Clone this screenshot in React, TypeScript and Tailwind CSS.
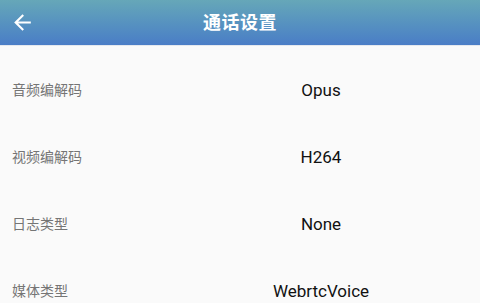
import React from "react";

const rows = [
  { label: "音频编解码", value: "Opus" },
  { label: "视频编解码", value: "H264" },
  { label: "日志类型", value: "None" },
  { label: "媒体类型", value: "WebrtcVoice" },
];

export default function App() {
  return (
    <div
      className="w-[480px] h-[303px] overflow-hidden bg-[#fafafa]"
      style={{ fontFamily: 'Roboto, "Noto Sans CJK SC", sans-serif' }}
    >
      <div className="relative h-[45px] flex items-center justify-center bg-gradient-to-b from-[#66a7b8] to-[#4a7dc6]">
        <svg
          className="absolute left-[10px] top-[10px]"
          width="25"
          height="25"
          viewBox="0 0 24 24"
          fill="white"
        >
          <path d="M20 11H7.83l5.59-5.59L12 4l-8 8 8 8 1.41-1.41L7.83 13H20v-2z" />
        </svg>
        <span className="text-white text-[18px] font-bold tracking-[0.5px]">通话设置</span>
      </div>
      <div className="h-px bg-[#e4e8ee]" />
      <div className="pt-[11px]">
        {rows.map((r) => (
          <div key={r.label} className="h-[67px] flex items-center">
            <div className="w-[162px] pl-[12px] text-[14px] text-[#757575]">{r.label}</div>
            <div className="flex-1 text-center text-[17px] text-[#111]">{r.value}</div>
          </div>
        ))}
      </div>
    </div>
  );
}
